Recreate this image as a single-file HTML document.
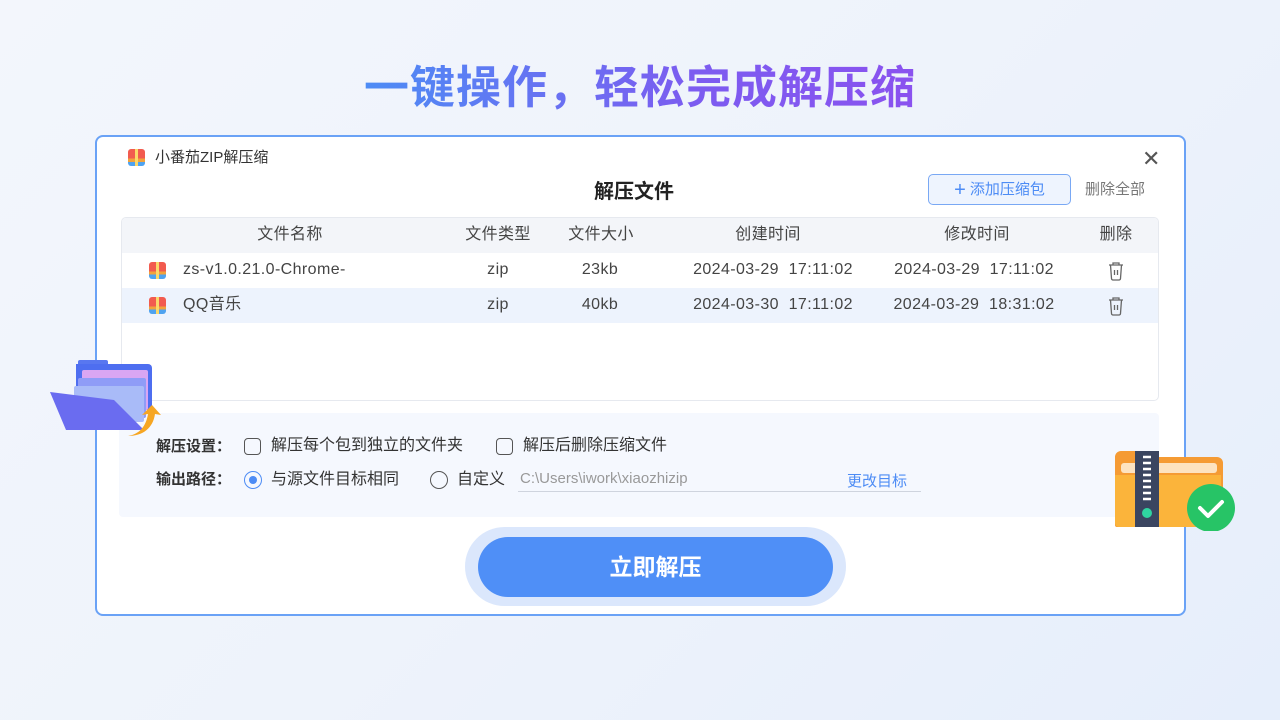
<!DOCTYPE html>
<html><head><meta charset="utf-8"><style>
*{margin:0;padding:0;box-sizing:border-box}
body{width:1280px;height:720px;overflow:hidden;position:relative;font-family:"Liberation Sans","Noto Sans CJK SC",sans-serif;background:linear-gradient(135deg,#f3f6fc 0%,#eef3fb 50%,#e6eefb 100%);color:#333}
.abs{position:absolute}
.title{left:0;width:1280px;top:60px;text-align:center;font-size:45px;font-weight:bold;letter-spacing:1px;line-height:56px}
.title span{background:linear-gradient(90deg,#4d8cf5,#7c5cf0 60%,#8a52ef);-webkit-background-clip:text;background-clip:text;color:transparent}
.win{left:95px;top:135px;width:1091px;height:481px;background:#fff;border:2px solid #6aa2f6;border-radius:8px}
.t{font-size:16px;color:#333;white-space:nowrap;line-height:20px}
.ic{width:17px;height:17px;border-radius:3px;background:linear-gradient(180deg,#f25b4f 0 55%,#f2a33c 55% 75%,#4fa3f0 75%);}
.ic:after{content:"";position:absolute;left:7px;top:0;width:3px;height:17px;background:#fbd86a}
.tbl{left:121px;top:217px;width:1038px;height:184px;border:1px solid #e6e9ef;border-radius:5px;overflow:hidden}
.row{position:absolute;left:0;width:100%;height:35px}
.row .t{position:absolute;top:7px;color:#444;letter-spacing:.4px}
.c{transform:translateX(-50%)}
</style></head><body>
<div class="abs title"><span>一键操作，轻松完成解压缩</span></div>
<div class="abs win"></div>
<div class="abs ic" style="left:128px;top:149px"></div>
<div class="abs t" style="left:155px;top:148px;font-size:15px">小番茄ZIP解压缩</div>
<div class="abs" style="left:1142px;top:150px;font-size:22px;color:#555;line-height:18px">✕</div>
<div class="abs t" style="left:594px;top:180px;font-size:20px;font-weight:bold;color:#222;line-height:24px">解压文件</div>
<div class="abs" style="left:928px;top:174px;width:143px;height:31px;border:1px solid #79a8f4;border-radius:5px;background:#eef4fe;color:#4d8cf5;font-size:15px;text-align:center;line-height:29px"><span style="font-size:20px;vertical-align:-2px">+</span> 添加压缩包</div>
<div class="abs t" style="left:1085px;top:180px;font-size:15px;color:#777">删除全部</div>
<div class="abs tbl">
 <div class="row" style="top:0;background:#f3f5f9">
  <div class="t c" style="left:168px">文件名称</div><div class="t c" style="left:376px">文件类型</div><div class="t c" style="left:479px">文件大小</div><div class="t c" style="left:646px">创建时间</div><div class="t c" style="left:855px">修改时间</div><div class="t c" style="left:994px">删除</div>
 </div>
 <div class="row" style="top:35px;background:#fff">
  <div class="abs ic" style="left:27px;top:9px"></div>
  <div class="t" style="left:61px">zs-v1.0.21.0-Chrome-</div><div class="t c" style="left:376px">zip</div><div class="t c" style="left:478px">23kb</div><div class="t c" style="left:651px">2024-03-29&nbsp;&nbsp;17:11:02</div><div class="t c" style="left:852px">2024-03-29&nbsp;&nbsp;17:11:02</div>
  <svg class="abs" style="left:985px;top:8px" width="18" height="20" viewBox="0 0 18 20" fill="none" stroke="#666" stroke-width="1.3"><path d="M2 4h14M6 4V2h6v2M3.5 4l1 13.5a1.5 1.5 0 0 0 1.5 1.5h6a1.5 1.5 0 0 0 1.5-1.5l1-13.5M7.5 9v5M10.5 9v5"/></svg>
 </div>
 <div class="row" style="top:70px;background:#edf3fd">
  <div class="abs ic" style="left:27px;top:9px"></div>
  <div class="t" style="left:61px">QQ音乐</div><div class="t c" style="left:376px">zip</div><div class="t c" style="left:478px">40kb</div><div class="t c" style="left:651px">2024-03-30&nbsp;&nbsp;17:11:02</div><div class="t c" style="left:852px">2024-03-29&nbsp;&nbsp;18:31:02</div>
  <svg class="abs" style="left:985px;top:8px" width="18" height="20" viewBox="0 0 18 20" fill="none" stroke="#666" stroke-width="1.3"><path d="M2 4h14M6 4V2h6v2M3.5 4l1 13.5a1.5 1.5 0 0 0 1.5 1.5h6a1.5 1.5 0 0 0 1.5-1.5l1-13.5M7.5 9v5M10.5 9v5"/></svg>
 </div>
</div>
<div class="abs" style="left:119px;top:413px;width:1040px;height:104px;background:#f5f8fe;border-radius:4px"></div>
<div class="abs t" style="left:156px;top:437px;font-weight:bold;font-size:15px">解压设置：</div>
<div class="abs" style="left:244px;top:438px;width:17px;height:17px;border:1.5px solid #555;border-radius:4px"></div>
<div class="abs t" style="left:271px;top:436px">解压每个包到独立的文件夹</div>
<div class="abs" style="left:496px;top:438px;width:17px;height:17px;border:1.5px solid #555;border-radius:4px"></div>
<div class="abs t" style="left:523px;top:436px">解压后删除压缩文件</div>
<div class="abs t" style="left:156px;top:470px;font-weight:bold;font-size:15px">输出路径：</div>
<div class="abs" style="left:244px;top:471px;width:18px;height:18px;border:1.5px solid #4d8cf5;border-radius:50%"><div style="margin:3.5px;width:8px;height:8px;border-radius:50%;background:#4d8cf5"></div></div>
<div class="abs t" style="left:271px;top:470px">与源文件目标相同</div>
<div class="abs" style="left:430px;top:471px;width:18px;height:18px;border:1.5px solid #555;border-radius:50%"></div>
<div class="abs t" style="left:457px;top:470px">自定义</div>
<div class="abs t" style="left:520px;top:469px;font-size:15px;color:#999">C:\Users\iwork\xiaozhizip</div>
<div class="abs" style="left:518px;top:491px;width:403px;height:1px;background:#cfd4de"></div>
<div class="abs t" style="left:847px;top:472px;font-size:15px;color:#4d8cf5">更改目标</div>
<div class="abs" style="left:465px;top:527px;width:381px;height:79px;border-radius:40px;background:#dbe7fc"></div>
<div class="abs" style="left:478px;top:537px;width:355px;height:60px;border-radius:30px;background:#4f8ff7;color:#fff;font-size:23px;font-weight:bold;text-align:center;line-height:60px">立即解压</div>
<svg class="abs" style="left:48px;top:358px" width="115" height="80" viewBox="0 0 115 80">
<rect x="30" y="2" width="30" height="8" rx="2" fill="#5877f0"/>
<path d="M28 6h72a4 4 0 0 1 4 4v42H28z" fill="#4e6ef0"/>
<rect x="34" y="12" width="66" height="40" rx="2" fill="#d9a6f3"/>
<rect x="30" y="20" width="68" height="40" rx="2" fill="#8f9cf7"/>
<rect x="26" y="28" width="70" height="36" rx="2" fill="#a9bbf8"/>
<path d="M2 34l64 8 30 30H18z" fill="#6a6cf0"/>
<path d="M80 78c12-2 18-10 20-22l-6 1 10-10 9 10-6-1c-2 14-12 22-27 22z" fill="#f6a623"/>
</svg>
<svg class="abs" style="left:1113px;top:449px" width="126" height="82" viewBox="0 0 126 82">
<path d="M2 8a6 6 0 0 1 6-6h26l6 6h64a6 6 0 0 1 6 6v62a2 2 0 0 1-2 2H4a2 2 0 0 1-2-2z" fill="#f59b34"/>
<rect x="8" y="14" width="96" height="10" rx="3" fill="#fde3c0"/>
<path d="M2 26h106v48a4 4 0 0 1-4 4H6a4 4 0 0 1-4-4z" fill="#fbb43b"/>
<rect x="22" y="2" width="24" height="76" fill="#3a4560"/>
<path d="M30 8h8M30 14h8M30 20h8M30 26h8M30 32h8M30 38h8M30 44h8M30 50h8" stroke="#fff" stroke-width="2.5"/>
<circle cx="34" cy="64" r="5" fill="#2fd4a0"/>
<circle cx="98" cy="59" r="24" fill="#27c466"/>
<path d="M87 59l8 8 14-14" stroke="#fff" stroke-width="4" fill="none" stroke-linecap="round" stroke-linejoin="round"/>
</svg>
</body></html>
